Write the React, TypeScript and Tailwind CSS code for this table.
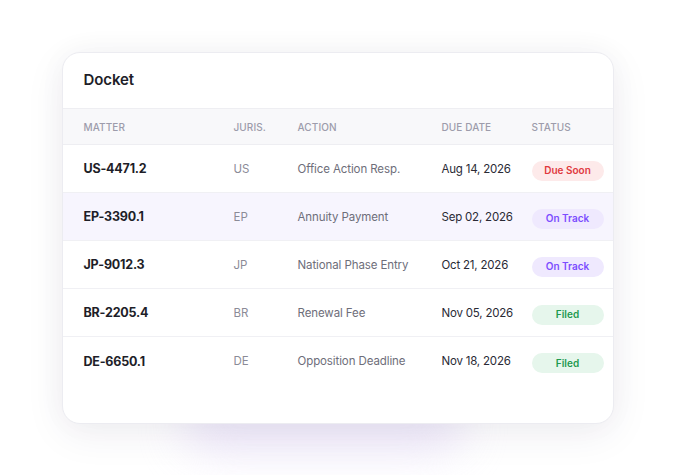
import React from "react";

type Row = {
  matter: string;
  juris: string;
  action: string;
  due: string;
  status: "Due Soon" | "On Track" | "Filed";
  highlight?: boolean;
};

const rows: Row[] = [
  { matter: "US-4471.2", juris: "US", action: "Office Action Resp.", due: "Aug 14, 2026", status: "Due Soon" },
  { matter: "EP-3390.1", juris: "EP", action: "Annuity Payment", due: "Sep 02, 2026", status: "On Track", highlight: true },
  { matter: "JP-9012.3", juris: "JP", action: "National Phase Entry", due: "Oct 21, 2026", status: "On Track" },
  { matter: "BR-2205.4", juris: "BR", action: "Renewal Fee", due: "Nov 05, 2026", status: "Filed" },
  { matter: "DE-6650.1", juris: "DE", action: "Opposition Deadline", due: "Nov 18, 2026", status: "Filed" },
];

function Badge({ status }: { status: Row["status"] }) {
  const cls =
    status === "Due Soon"
      ? "bg-[#fdeaea] text-[#e0393e]"
      : status === "On Track"
      ? "bg-[#efe9fe] text-[#7c4dff]"
      : "bg-[#e6f6ec] text-[#1f9a4f]";
  return (
    <span
      className={`mt-[2px] inline-flex h-[20px] w-[72px] items-center justify-center rounded-full text-[10px] font-semibold ${cls}`}
    >
      {status}
    </span>
  );
}

export default function App() {
  return (
    <div
      className="flex h-[475px] w-full items-center justify-center bg-white"
      style={{ fontFamily: "Inter, 'Noto Sans', sans-serif" }}
    >
      <div className="relative">
        <div className="pointer-events-none absolute bottom-[-30px] left-[120px] right-[150px] h-[60px] rounded-full bg-[#e9e1f8] opacity-70 blur-[22px]" />
        <div className="relative h-[372px] w-[552px] overflow-hidden rounded-[18px] border border-[#ececf1] bg-white shadow-[0_10px_40px_rgba(40,30,80,0.07),0_0_30px_rgba(0,0,0,0.03)]">
          <div className="flex h-[55px] items-center px-[21px]">
            <span className="text-[15px] font-semibold tracking-[-0.1px] text-[#1e1e28]">Docket</span>
          </div>
          <div className="grid h-[37px] grid-cols-[150px_64px_144px_90px_1fr] items-center border-y border-[#eeeef2] bg-[#f8f8fa] pl-[21px] pt-[2px] text-[10px] font-medium uppercase tracking-[0.1px] text-[#9d9cab]">
            <span>Matter</span>
            <span>Juris.</span>
            <span>Action</span>
            <span>Due Date</span>
            <span>Status</span>
          </div>
          {rows.map((r, i) => (
            <div
              key={r.matter}
              className={`grid h-[48px] grid-cols-[150px_64px_144px_90px_1fr] items-center pl-[21px] pt-[3px] ${
                i < rows.length - 1 ? "border-b border-[#f0f0f4]" : ""
              } ${r.highlight ? "bg-[#f7f5fe]" : ""}`}
            >
              <span className="text-[12.5px] font-bold tracking-[-0.2px] text-[#1e1e28]">{r.matter}</span>
              <span className="text-[11.5px] text-[#8b8b97]">{r.juris}</span>
              <span className="text-[11.5px] tracking-[-0.1px] text-[#6e6e7a]">{r.action}</span>
              <span className="text-[11.5px] tracking-[-0.2px] text-[#2a2a35]">{r.due}</span>
              <span className="flex">
                <Badge status={r.status} />
              </span>
            </div>
          ))}
        </div>
      </div>
    </div>
  );
}
